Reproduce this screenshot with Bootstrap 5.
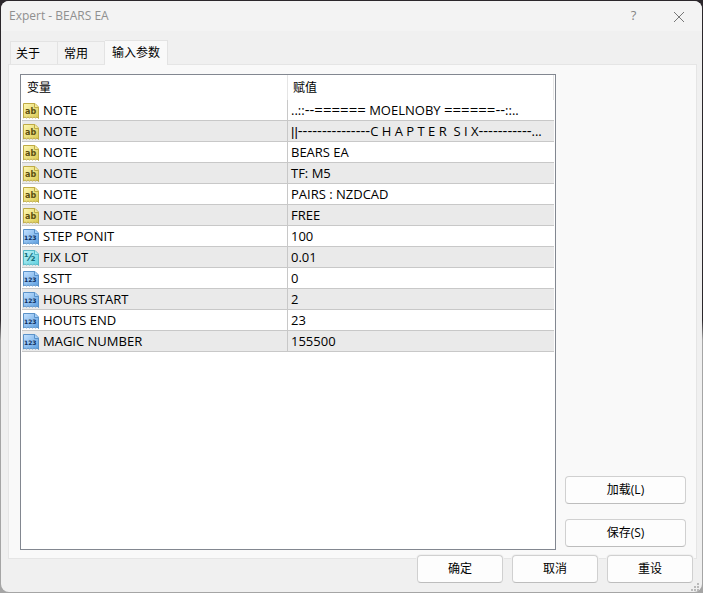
<!DOCTYPE html>
<html lang="zh-CN">
<head>
<meta charset="utf-8">
<meta name="viewport" content="width=device-width, initial-scale=1">
<title>Expert - BEARS EA</title>
<link href="https://cdn.jsdelivr.net/npm/bootstrap@5.3.0/dist/css/bootstrap.min.css" rel="stylesheet">
<style>
body { font: 13px/20px "Open Sans", "Noto Sans CJK SC", sans-serif; color: #000; background: linear-gradient(#2b272b 320px, #a5a5a5 340px); padding: 1px; }
.dialog { min-height: calc(100vh - 2px); background: #f0f0f0; border-radius: 8px; }
.titlebar { height: 30px; background: #f3f3f3; color: #8f8f8f; font-size: 12px; padding: 0 1px 0 8px; border-radius: 8px 8px 0 0; }
.titlebar button { width: 45px; height: 30px; color: #858585; background: none; border: 0; padding: 0 0 2px; font-size: 13px; }
.tabs { margin: 9px 9px 0; }
.tabs .nav-link { height: 23px; padding: 0 5px; font-size: 12px; line-height: 23px; color: #000; text-align: left; background: #f3f3f3; border: 1px solid #e3e3e3; border-bottom: 0; border-radius: 0; }
.tabs .tab-about { width: 48px; }
.tabs .tab-common { width: 47px; border-left: 0; padding-left: 6px; }
.tabs .nav-link.active { height: 25px; width: 63px; margin-bottom: -1px; padding: 0 7px; line-height: 22px; background: #f9f9f9; color: #000; border-color: #e3e3e3; border-left: 0; position: relative; }
.page { margin: 0 5px 0 7px; padding: 9px 10px 8px 11px; background: #f9f9f9; border: 1px solid #e5e5e5; gap: 9px; }
.grid-box { border: 1px solid #828790; background: #fff; padding: 0 1px; min-width: 0; }
.params { table-layout: fixed; width: 100%; border-collapse: separate; border-spacing: 0; }
.params th { height: 25px; font-weight: 400; font-size: 12px; padding: 0 5px; border-right: 1px solid #e5e5e5; }
.params td { height: 21px; padding: 0 3px; line-height: 20px; white-space: nowrap; border-bottom: 1px solid #c8c8c8; }
.params td:first-child { padding: 0 1px; border-right: 1px solid #c8c8c8; }
.params tr:nth-child(even) td { background: #eaeaea; }
.dashes { font-size: 15px; line-height: 1; }
.bars { font-family: "Liberation Sans", sans-serif; line-height: 1; }
.ico { width: 16px; height: 16px; margin-right: 4px; vertical-align: -4px; }
symbol text { font-family: "DejaVu Sans", sans-serif; font-weight: 700; }
.side { width: 121px; gap: 15px; padding-bottom: 3px; }
.push { height: 28px; padding: 0; font-size: 12px; line-height: 24px; color: #000; background: #fdfdfd; border: 1px solid #d0d0d0; border-bottom-color: #bdbdbd; border-radius: 4px; }
.foot { margin-top: -4px; padding: 0 9px 9px; gap: 9px; position: relative; }
.foot .push { width: 86px; box-shadow: 0 0 0 1px #f0f0f0; }
.grip { position: absolute; right: 3px; bottom: 1px; width: 8px; height: 8px; }
</style>
<script src="https://cdn.jsdelivr.net/npm/bootstrap@5.3.0/dist/js/bootstrap.bundle.min.js"></script>
</head>
<body>
<svg width="0" height="0" class="position-absolute" aria-hidden="true">
<defs>
<linearGradient id="gy" x2="1" y2="1"><stop stop-color="#fff9b5"/><stop offset="1" stop-color="#d9c850"/></linearGradient>
<linearGradient id="gb" x2="1" y2="1"><stop stop-color="#c5e2ff"/><stop offset="1" stop-color="#5b9ee0"/></linearGradient>
<linearGradient id="gc" x2="1" y2="1"><stop stop-color="#c2f4f8"/><stop offset="1" stop-color="#5fd0de"/></linearGradient>
<symbol id="s-ab" viewBox="0 0 16 16"><path d="M.5.5h11.500l3.500 3.500v11.500l-1.500-1.500-1.500 1-1.500-1-1.500 1-1.500-1-1.500 1-1.500-1-1.500 1-1.500-1-1.500 1z" fill="url(#gy)" stroke="#bfab45"/><path d="M11.500.5v4h4" fill="#f4eb9c" stroke="#bfab45"/><text x="2" y="11" font-size="8" fill="#5b4f10">ab</text></symbol>
<symbol id="s-int" viewBox="0 0 16 16"><path d="M.5.5h11.500l3.500 3.500v11.500l-1.500-1.500-1.500 1-1.500-1-1.500 1-1.500-1-1.500 1-1.500-1-1.500 1-1.500-1-1.500 1z" fill="url(#gb)" stroke="#5a92c9"/><path d="M11.500.5v4h4" fill="#a5d0fa" stroke="#5a92c9"/><text x="1" y="11" font-size="6" fill="#0c2c5c">123</text></symbol>
<symbol id="s-dbl" viewBox="0 0 16 16"><path d="M.5.5h11.500l3.500 3.500v11.500l-1.500-1.500-1.500 1-1.500-1-1.500 1-1.500-1-1.500 1-1.500-1-1.500 1-1.500-1-1.500 1z" fill="url(#gc)" stroke="#55b8c6"/><path d="M11.500.5v4h4" fill="#b0eef3" stroke="#55b8c6"/><text x="1" y="11" font-size="11" fill="#136b7a">½</text></symbol>
</defs>
</svg>
<main class="dialog d-flex flex-column">
<header class="titlebar d-flex align-items-center">
<span class="me-auto">Expert - BEARS EA</span>
<button type="button" aria-label="帮助">?</button>
<button type="button" aria-label="关闭"><svg width="12" height="12" viewBox="0 0 12 12" stroke="#777" fill="none"><path d="M1 1l10 10M11 1L1 11"/></svg></button>
</header>
<div class="tabs nav d-flex align-items-end" role="tablist">
<button class="nav-link tab-about" type="button" role="tab">关于</button>
<button class="nav-link tab-common" type="button" role="tab">常用</button>
<button class="nav-link active" type="button" role="tab" aria-selected="true">输入参数</button>
</div>
<section class="page d-flex flex-grow-1">
<div class="grid-box flex-grow-1">
<table class="params">
<thead><tr><th scope="col">变量</th><th scope="col">赋值</th></tr></thead>
<tbody>
<tr><td><svg class="ico"><use href="#s-ab"/></svg>NOTE</td><td>..::<span class="dashes">--======</span> MOELNOBY <span class="dashes">======--</span>::..</td></tr>
<tr><td><svg class="ico"><use href="#s-ab"/></svg>NOTE</td><td><span class="bars">||</span><span class="dashes">---------------</span>C H A P T E R &nbsp;S I X<span class="dashes">-----------</span>...</td></tr>
<tr><td><svg class="ico"><use href="#s-ab"/></svg>NOTE</td><td>BEARS EA</td></tr>
<tr><td><svg class="ico"><use href="#s-ab"/></svg>NOTE</td><td>TF: M5</td></tr>
<tr><td><svg class="ico"><use href="#s-ab"/></svg>NOTE</td><td>PAIRS : NZDCAD</td></tr>
<tr><td><svg class="ico"><use href="#s-ab"/></svg>NOTE</td><td>FREE</td></tr>
<tr><td><svg class="ico"><use href="#s-int"/></svg>STEP PONIT</td><td>100</td></tr>
<tr><td><svg class="ico"><use href="#s-dbl"/></svg>FIX LOT</td><td>0.01</td></tr>
<tr><td><svg class="ico"><use href="#s-int"/></svg>SSTT</td><td>0</td></tr>
<tr><td><svg class="ico"><use href="#s-int"/></svg>HOURS START</td><td>2</td></tr>
<tr><td><svg class="ico"><use href="#s-int"/></svg>HOUTS END</td><td>23</td></tr>
<tr><td><svg class="ico"><use href="#s-int"/></svg>MAGIC NUMBER</td><td>155500</td></tr>
</tbody>
</table>
</div>
<div class="side d-flex flex-column justify-content-end flex-shrink-0">
<button class="btn push" type="button">加载(L)</button>
<button class="btn push" type="button">保存(S)</button>
</div>
</section>
<footer class="foot d-flex justify-content-end">
<button class="btn push" type="button">确定</button>
<button class="btn push" type="button">取消</button>
<button class="btn push" type="button">重设</button>
<svg class="grip" viewBox="0 0 8 8" fill="#bababa" aria-hidden="true"><path d="M6 0h2v2H6zM3 3h2v2H3zM6 3h2v2H6zM0 6h2v2H0zM3 6h2v2H3zM6 6h2v2H6z"/></svg>
</footer>
</main>
</body>
</html>
